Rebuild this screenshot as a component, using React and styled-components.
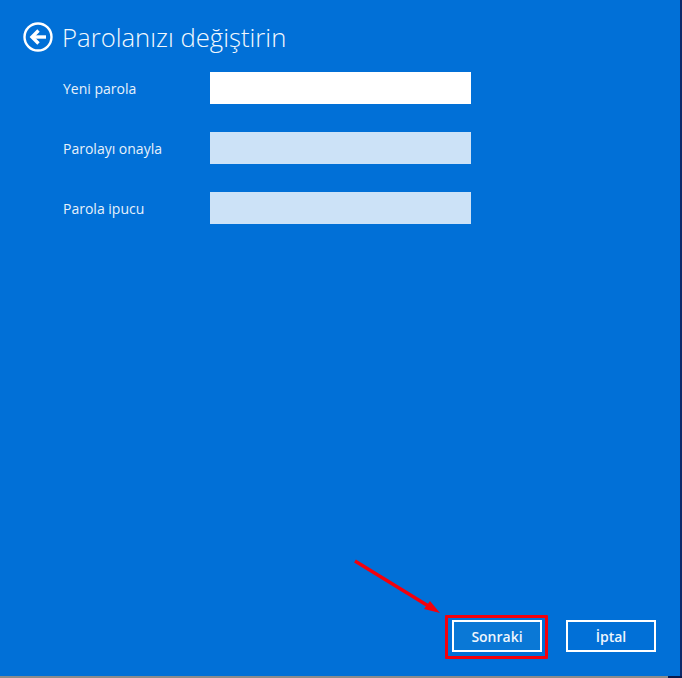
import React from "react";
import styled, { createGlobalStyle } from "styled-components";

const GlobalStyle = createGlobalStyle`
  html, body {
    margin: 0;
    padding: 0;
    background: #8c8c8c;
  }
  * {
    box-sizing: border-box;
  }
`;

const Screen = styled.div`
  position: relative;
  width: 682px;
  height: 678px;
  overflow: hidden;
  background: linear-gradient(to right, #8c8c8c 668px, #0b1a4a 668px);
`;

const Panel = styled.div`
  width: 680px;
  height: 676px;
  padding: 21px 24px 24px 23px;
  display: flex;
  flex-direction: column;
  background: #0170d7;
  color: #fff;
  font-family: "Open Sans", "Noto Sans", sans-serif;
  box-shadow: 2px 0 0 #0b2a6b;
`;

const Header = styled.header`
  display: flex;
  align-items: center;
  gap: 9px;
  height: 32px;
`;

const BackIcon = styled.svg`
  width: 30px;
  height: 30px;
  flex: none;
`;

const Title = styled.h1`
  margin: 2px 0 0;
  font-size: 25.7px;
  font-weight: 300;
  line-height: 32px;
  color: #f2f8fd;
  white-space: nowrap;
`;

const Form = styled.div`
  display: flex;
  flex-direction: column;
  gap: 28px;
  margin: 19px 0 0 40px;
`;

const Row = styled.div`
  display: flex;
  align-items: center;
  height: 32px;
`;

const Label = styled.label`
  width: 147px;
  font-size: 14px;
  color: #e6f1fb;
`;

const Field = styled.div`
  width: 261px;
  height: 32px;
  background: ${({ $active }) => ($active ? "#ffffff" : "#cce2f7")};
`;

const Footer = styled.footer`
  display: flex;
  justify-content: flex-end;
  gap: 24px;
  margin-top: auto;
`;

const Button = styled.button`
  width: 90px;
  height: 32px;
  padding: 0;
  border: 2px solid #fff;
  background: ${({ $primary }) => ($primary ? "#0a78d6" : "transparent")};
  color: #eef6fd;
  font-family: inherit;
  font-size: 14px;
  font-weight: 600;
`;

const Highlight = styled.div`
  position: absolute;
  left: 445px;
  top: 615px;
  width: 103px;
  height: 44px;
  border: 3px solid #f4000b;
  border-radius: 1px;
`;

const Arrow = styled.svg`
  position: absolute;
  left: 350px;
  top: 555px;
  width: 95px;
  height: 60px;
`;

export default function App() {
  return (
    <Screen>
      <GlobalStyle />
      <Panel>
        <Header>
          <BackIcon viewBox="0 0 30 30" fill="none">
            <circle cx="15" cy="15" r="13.5" stroke="#fff" strokeWidth="2.4" />
            <path d="M23 15H10" stroke="#fff" strokeWidth="3.4" />
            <path d="M15.5 8.5L9 15l6.5 6.5" stroke="#fff" strokeWidth="3.4" />
          </BackIcon>
          <Title>Parolanızı değiştirin</Title>
        </Header>
        <Form>
          <Row>
            <Label>Yeni parola</Label>
            <Field $active />
          </Row>
          <Row>
            <Label>Parolayı onayla</Label>
            <Field />
          </Row>
          <Row>
            <Label>Parola ipucu</Label>
            <Field />
          </Row>
        </Form>
        <Footer>
          <Button $primary>Sonraki</Button>
          <Button>İptal</Button>
        </Footer>
      </Panel>
      <Highlight />
      <Arrow viewBox="0 0 95 60" fill="none">
        <path d="M5 6L80 52" stroke="#f4000b" strokeWidth="3.4" />
        <path d="M90 58L74 54L80 46Z" fill="#f4000b" />
      </Arrow>
    </Screen>
  );
}
